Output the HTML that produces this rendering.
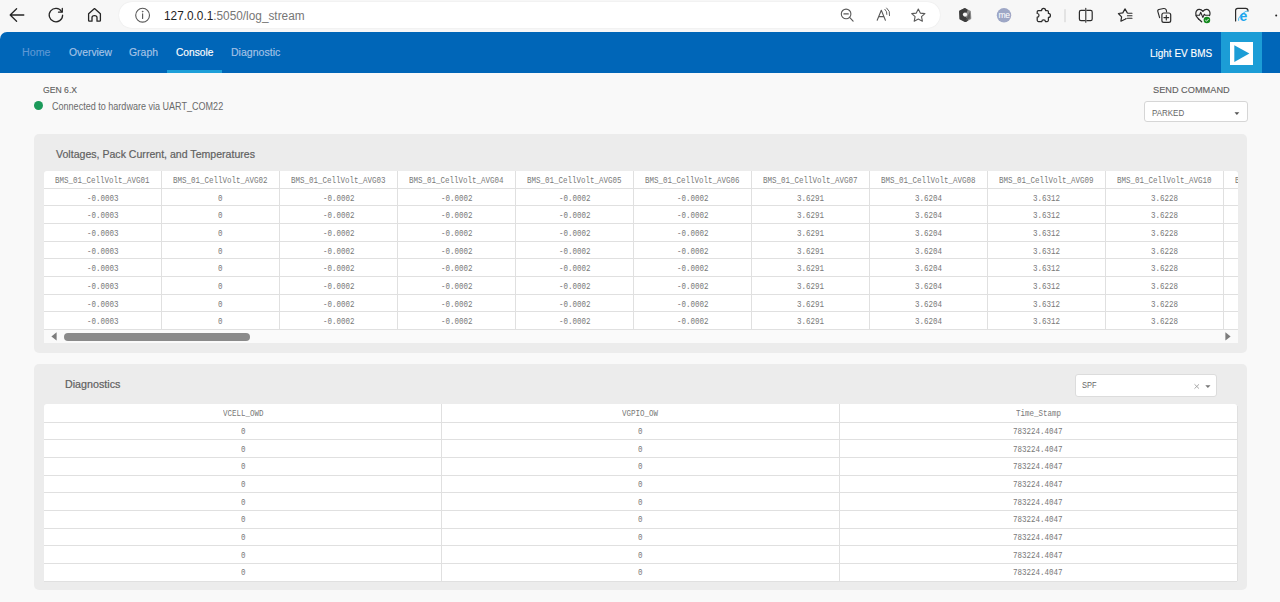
<!DOCTYPE html>
<html><head><meta charset="utf-8">
<style>
*{margin:0;padding:0;box-sizing:border-box}
html,body{width:1280px;height:602px;overflow:hidden;background:#f9f9f9;font-family:"Liberation Sans",sans-serif}
.abs{position:absolute}
#chrome{position:absolute;left:0;top:0;width:1280px;height:33px;background:#f7f7f7}
#pill{position:absolute;left:119px;top:2px;width:821px;height:25.8px;background:#fff;border-radius:12.9px;box-shadow:0 0 1.5px rgba(0,0,0,.10)}
#nav{position:absolute;left:0;top:32.3px;width:1280px;height:41px;background:#0066b8;border-top-left-radius:7px}
.card{position:absolute;left:34px;width:1213px;background:#ececec;border-radius:5px}
.hl{position:absolute;left:0;height:1px;background:#e0e0e0}
.vl{position:absolute;top:0;width:1px;background:#e0e0e0}
svg{position:absolute;overflow:visible}
</style></head>
<body>

<div id="chrome"><div id="pill"></div></div>
<div style="position:absolute;left:164.40px;top:9.00px;font-family:'Liberation Sans',sans-serif;font-weight:normal;font-size:13.66px;line-height:1;color:#767676;white-space:nowrap;transform:scaleX(0.8651);transform-origin:0 0;"><span style="color:#1f1f1f">127.0.0.1</span>:5050/log_stream</div>
<svg style="left:0;top:0" width="1280" height="32" viewBox="0 0 1280 32">
<g fill="none" stroke-linecap="round" stroke-linejoin="round">
<path d="M10.2 15 L23.8 15 M16.6 8.7 L10.2 15 L16.6 21.2" stroke="#262626" stroke-width="1.3"/>
<path d="M61.6 11.6 A6.7 6.7 0 1 0 62.6 15.2" stroke="#262626" stroke-width="1.3"/>
<path d="M62.3 8.4 L62.3 12.2 L58.5 12.2" stroke="#262626" stroke-width="1.3"/>
<path d="M88.6 13.8 L94.5 8.6 L100.4 13.8 L100.4 20.5 Q100.4 21.2 99.7 21.2 L97 21.2 L97 17.6 Q97 15.7 94.5 15.7 Q92 15.7 92 17.6 L92 21.2 L89.3 21.2 Q88.6 21.2 88.6 20.5 Z" stroke="#262626" stroke-width="1.3"/>
<circle cx="142.6" cy="15.2" r="6.9" stroke="#5a5a5a" stroke-width="1.1"/>
<path d="M142.6 13.7 L142.6 18.5" stroke="#5a5a5a" stroke-width="1.15"/>
<circle cx="142.6" cy="11.6" r="0.55" fill="#5a5a5a" stroke="#5a5a5a" stroke-width="0.4"/>
<circle cx="846.1" cy="13.9" r="4.8" stroke="#5a5a5a" stroke-width="1.1"/>
<path d="M843.9 13.9 L848.3 13.9 M849.6 17.4 L853.1 21.1" stroke="#5a5a5a" stroke-width="1.15"/>
<path d="M877.2 20.2 L881.3 10.3 L885.4 20.2 M878.6 16.6 L884 16.6" stroke="#5a5a5a" stroke-width="1.1"/>
<path d="M884.9 9.3 Q887.4 11.6 886.9 14.4 M886.7 8 Q890.6 11.2 889.6 15.6" stroke="#5a5a5a" stroke-width="0.95"/>
<path d="M918.3 9.1 L920.3 13.1 L924.9 13.6 L921.5 16.6 L922.4 21.2 L918.3 19 L914.2 21.2 L915.1 16.6 L911.7 13.6 L916.3 13.1 Z" stroke="#5a5a5a" stroke-width="1.1"/>
<path d="M1041.6 10.6 Q1041.6 8.4 1043.6 8.4 Q1045.6 8.4 1045.6 10.6 L1047.2 10.6 Q1048.4 10.6 1048.4 11.8 L1048.4 13.4 Q1050.4 13.4 1050.4 15.4 Q1050.4 17.4 1048.4 17.4 L1048.4 20.3 Q1048.4 21.5 1047.2 21.5 L1045.4 21.5 Q1045.4 19.8 1043.6 19.8 Q1041.8 19.8 1041.8 21.5 L1038.4 21.5 Q1037.2 21.5 1037.2 20.3 L1037.2 17.2 Q1039 17.2 1039 15.3 Q1039 13.4 1037.2 13.4 L1037.2 11.8 Q1037.2 10.6 1038.4 10.6 Z" stroke="#2b2b2b" stroke-width="1.25"/>
<path d="M1084.7 10.4 L1081 10.4 Q1079.4 10.4 1079.4 12 L1079.4 19 Q1079.4 20.6 1081 20.6 L1084.7 20.6 M1086.9 10.4 L1090.6 10.4 Q1092.2 10.4 1092.2 12 L1092.2 19 Q1092.2 20.6 1090.6 20.6 L1086.9 20.6" stroke="#2b2b2b" stroke-width="1.2"/>
<path d="M1085.8 8.4 L1085.8 22.2" stroke="#2b2b2b" stroke-width="1.1"/>
<path d="M1127.3 12.9 L1125 8.9 L1122.8 12.9 L1118.4 13.5 L1121.6 16.8 L1120.9 21.2 L1125 19.2 L1126.1 18.6" stroke="#2b2b2b" stroke-width="1.2"/>
<path d="M1128 13.3 L1132 13.3 M1127.4 15.8 L1132 15.8 M1127.4 18.3 L1132 18.3" stroke="#2b2b2b" stroke-width="1.1"/>
<path d="M1159.6 17.6 L1157.8 11.4 Q1157.4 9.9 1158.9 9.5 L1163.6 8.5 Q1165.5 8.2 1166.3 10 L1166.6 12" stroke="#2b2b2b" stroke-width="1.15"/>
<rect x="1161.9" y="13" width="8.8" height="9.3" rx="1.9" stroke="#2b2b2b" stroke-width="1.2"/>
<path d="M1166.3 15.3 L1166.3 20 M1163.9 17.6 L1168.7 17.6" stroke="#2b2b2b" stroke-width="1.1"/>
<path d="M1198.6 19 L1197 17.2 Q1195.6 15.6 1195.8 13.1 Q1196.2 9.6 1199.2 9.4 Q1201.3 9.3 1202.9 11.4 Q1204.5 9.3 1206.6 9.4 Q1209.6 9.6 1210 13.1 Q1210.1 14.6 1209.5 15.6" stroke="#2b2b2b" stroke-width="1.2"/>
<path d="M1196.2 15.3 L1199.5 15.3 L1200.7 12.2 L1202.8 17.4 L1204.3 14.2 L1205.3 15.3 L1209.5 15.3" stroke="#2b2b2b" stroke-width="1.1"/>
<path d="M1198.6 19 L1201.7 21.8" stroke="#2b2b2b" stroke-width="1.2"/>
<path d="M1235.6 21 L1235.6 10.6 Q1235.6 8.4 1237.8 8.4 L1245.7 8.4 Q1247.9 8.4 1247.9 10.6 L1247.9 11" stroke="#2b2b2b" stroke-width="1.2"/>
</g>
<path d="M960.2 11.6 L964.8 9.2 L969.8 11.8 L970.2 18.2 L965.4 21 L960.6 18.6 Z" fill="#8a8a8a" stroke="#8a8a8a" stroke-width="2.2" stroke-linejoin="round"/>
<path d="M960.2 11.6 L964.8 9.2 L966.5 10.1 L963.4 15.6 L967 19.9 L965.4 21 L960.6 18.6 Z" fill="#3c3c3c" stroke="#3c3c3c" stroke-width="2.2" stroke-linejoin="round"/>
<path d="M969.8 11.8 L970.2 18.2 L966.2 20.5 L967.4 16.5 Z" fill="#5a5a5a"/>
<circle cx="965" cy="14.6" r="2.1" fill="#f4f4f4"/>
<circle cx="1004" cy="15.3" r="7.2" fill="#9ea7c6"/>
<text x="1004.1" y="17.9" font-size="8.6" fill="#fff" text-anchor="middle" font-family="Liberation Sans" letter-spacing="-0.4">me</text>
<line x1="1065" y1="9.2" x2="1065" y2="22.2" stroke="#cfcfcf" stroke-width="1"/>
<circle cx="1206.9" cy="20" r="3.3" fill="#138a1e"/>
<path d="M1205.3 20.1 L1206.5 21.2 L1208.6 19" fill="none" stroke="#fff" stroke-width="0.9"/>
<path d="M1238.6 20.8 Q1237.4 18.6 1241.5 14.6 Q1246.6 10 1248.6 11.2" fill="none" stroke="#2bb2f2" stroke-width="0.9"/>
<text x="1243.4" y="20.6" font-size="14" font-weight="bold" fill="#1ea6ee" text-anchor="middle" font-family="Liberation Sans">e</text>
<circle cx="1276.2" cy="15.4" r="1" fill="#222"/>
</svg>
<div id="nav"></div>
<div style="position:absolute;left:22.00px;top:47.20px;font-family:'Liberation Sans',sans-serif;font-weight:normal;font-size:10.61px;line-height:1;color:#5e98d4;white-space:nowrap;transform:scaleX(1.0068);transform-origin:0 0;-webkit-text-stroke:0.15px currentColor">Home</div>
<div style="position:absolute;left:68.60px;top:47.20px;font-family:'Liberation Sans',sans-serif;font-weight:normal;font-size:10.61px;line-height:1;color:#a6c3e6;white-space:nowrap;transform:scaleX(0.9741);transform-origin:0 0;-webkit-text-stroke:0.15px currentColor">Overview</div>
<div style="position:absolute;left:129.00px;top:47.20px;font-family:'Liberation Sans',sans-serif;font-weight:normal;font-size:10.61px;line-height:1;color:#a6c3e6;white-space:nowrap;transform:scaleX(0.9835);transform-origin:0 0;-webkit-text-stroke:0.15px currentColor">Graph</div>
<div style="position:absolute;left:175.60px;top:47.20px;font-family:'Liberation Sans',sans-serif;font-weight:normal;font-size:10.61px;line-height:1;color:#ffffff;white-space:nowrap;transform:scaleX(0.9607);transform-origin:0 0;-webkit-text-stroke:0.15px currentColor">Console</div>
<div class="abs" style="left:167px;top:70px;width:55px;height:3px;background:#1ea0d9"></div>
<div style="position:absolute;left:231.40px;top:47.20px;font-family:'Liberation Sans',sans-serif;font-weight:normal;font-size:10.61px;line-height:1;color:#a6c3e6;white-space:nowrap;transform:scaleX(0.9952);transform-origin:0 0;-webkit-text-stroke:0.15px currentColor">Diagnostic</div>
<div style="position:absolute;left:1149.80px;top:48.00px;font-family:'Liberation Sans',sans-serif;font-weight:normal;font-size:11.48px;line-height:1;color:#ffffff;white-space:nowrap;transform:scaleX(0.8704);transform-origin:0 0;-webkit-text-stroke:0.15px currentColor">Light EV BMS</div>
<div class="abs" style="left:1221px;top:32.3px;width:41px;height:41px;background:#1c9dd6"></div>
<div class="abs" style="left:1230px;top:42px;width:23px;height:23px;background:#fff"></div>
<svg style="left:1230px;top:42px" width="23" height="23"><path d="M4.3 3.3 L19.4 11.5 L4.3 20 Z" fill="#1c9dd6"/></svg>
<div style="position:absolute;left:43.00px;top:86.20px;font-family:'Liberation Sans',sans-serif;font-weight:normal;font-size:9.01px;line-height:1;color:#5e5e5e;white-space:nowrap;transform:scaleX(0.9591);transform-origin:0 0;-webkit-text-stroke:0.12px #5e5e5e">GEN 6.X</div>
<div class="abs" style="left:33.9px;top:101.3px;width:9px;height:9px;border-radius:50%;background:#1b9a5a"></div>
<div style="position:absolute;left:52.00px;top:101.60px;font-family:'Liberation Sans',sans-serif;font-weight:normal;font-size:10.17px;line-height:1;color:#6a6a6a;white-space:nowrap;transform:scaleX(0.8901);transform-origin:0 0;">Connected to hardware via UART_COM22</div>
<div style="position:absolute;left:1152.50px;top:86.40px;font-family:'Liberation Sans',sans-serif;font-weight:normal;font-size:9.30px;line-height:1;color:#5e5e5e;white-space:nowrap;transform:scaleX(0.9896);transform-origin:0 0;-webkit-text-stroke:0.12px #5e5e5e">SEND COMMAND</div>
<div class="abs" style="left:1143.5px;top:101px;width:104px;height:21px;background:#fff;border:1px solid #d6d6d6;border-radius:3px"></div>
<div style="position:absolute;left:1151.80px;top:107.80px;font-family:'Liberation Sans',sans-serif;font-weight:normal;font-size:9.45px;line-height:1;color:#666;white-space:nowrap;transform:scaleX(0.8438);transform-origin:0 0;">PARKED</div>
<svg style="left:1234px;top:111.5px" width="6" height="4"><path d="M0.5 0.3 L5.3 0.3 L2.9 3 Z" fill="#555"/></svg>
<div class="card" style="top:133.7px;height:219px"></div>
<div style="position:absolute;left:56.00px;top:148.60px;font-family:'Liberation Sans',sans-serif;font-weight:normal;font-size:11.34px;line-height:1;color:#606060;white-space:nowrap;transform:scaleX(0.9331);transform-origin:0 0;-webkit-text-stroke:0.2px #606060">Voltages, Pack Current, and Temperatures</div>
<div class="abs" style="left:44px;top:170.8px;width:1193.6px;height:172.18px;background:#fff;border-radius:3px 3px 0 0"></div>
<div class="abs" style="left:44px;top:170.8px;width:1193.6px;height:172.18px;overflow:hidden">
<div style="position:absolute;left:11.46px;top:5.90px;font-family:'Liberation Mono',monospace;font-size:8.3px;line-height:1;color:#787878;white-space:nowrap;transform:scaleX(0.905);transform-origin:0 0">BMS_01_CellVolt_AVG01</div>
<div style="position:absolute;left:129.21px;top:5.90px;font-family:'Liberation Mono',monospace;font-size:8.3px;line-height:1;color:#787878;white-space:nowrap;transform:scaleX(0.905);transform-origin:0 0">BMS_01_CellVolt_AVG02</div>
<div style="position:absolute;left:247.15px;top:5.90px;font-family:'Liberation Mono',monospace;font-size:8.3px;line-height:1;color:#787878;white-space:nowrap;transform:scaleX(0.905);transform-origin:0 0">BMS_01_CellVolt_AVG03</div>
<div style="position:absolute;left:365.09px;top:5.90px;font-family:'Liberation Mono',monospace;font-size:8.3px;line-height:1;color:#787878;white-space:nowrap;transform:scaleX(0.905);transform-origin:0 0">BMS_01_CellVolt_AVG04</div>
<div style="position:absolute;left:483.03px;top:5.90px;font-family:'Liberation Mono',monospace;font-size:8.3px;line-height:1;color:#787878;white-space:nowrap;transform:scaleX(0.905);transform-origin:0 0">BMS_01_CellVolt_AVG05</div>
<div style="position:absolute;left:600.97px;top:5.90px;font-family:'Liberation Mono',monospace;font-size:8.3px;line-height:1;color:#787878;white-space:nowrap;transform:scaleX(0.905);transform-origin:0 0">BMS_01_CellVolt_AVG06</div>
<div style="position:absolute;left:718.91px;top:5.90px;font-family:'Liberation Mono',monospace;font-size:8.3px;line-height:1;color:#787878;white-space:nowrap;transform:scaleX(0.905);transform-origin:0 0">BMS_01_CellVolt_AVG07</div>
<div style="position:absolute;left:836.85px;top:5.90px;font-family:'Liberation Mono',monospace;font-size:8.3px;line-height:1;color:#787878;white-space:nowrap;transform:scaleX(0.905);transform-origin:0 0">BMS_01_CellVolt_AVG08</div>
<div style="position:absolute;left:954.79px;top:5.90px;font-family:'Liberation Mono',monospace;font-size:8.3px;line-height:1;color:#787878;white-space:nowrap;transform:scaleX(0.905);transform-origin:0 0">BMS_01_CellVolt_AVG09</div>
<div style="position:absolute;left:1072.73px;top:5.90px;font-family:'Liberation Mono',monospace;font-size:8.3px;line-height:1;color:#787878;white-space:nowrap;transform:scaleX(0.905);transform-origin:0 0">BMS_01_CellVolt_AVG10</div>
<div style="position:absolute;left:1190.67px;top:5.90px;font-family:'Liberation Mono',monospace;font-size:8.3px;line-height:1;color:#787878;white-space:nowrap;transform:scaleX(0.905);transform-origin:0 0">BMS_01_CellVolt_AVG11</div>
<div class="hl" style="top:17.00px;width:1194px"></div>
<div style="position:absolute;left:43.01px;top:23.80px;font-family:'Liberation Mono',monospace;font-size:8.3px;line-height:1;color:#787878;white-space:nowrap;transform:scaleX(0.905);transform-origin:0 0">-0.0003</div>
<div style="position:absolute;left:174.29px;top:23.80px;font-family:'Liberation Mono',monospace;font-size:8.3px;line-height:1;color:#787878;white-space:nowrap;transform:scaleX(0.905);transform-origin:0 0">0</div>
<div style="position:absolute;left:278.70px;top:23.80px;font-family:'Liberation Mono',monospace;font-size:8.3px;line-height:1;color:#787878;white-space:nowrap;transform:scaleX(0.905);transform-origin:0 0">-0.0002</div>
<div style="position:absolute;left:396.64px;top:23.80px;font-family:'Liberation Mono',monospace;font-size:8.3px;line-height:1;color:#787878;white-space:nowrap;transform:scaleX(0.905);transform-origin:0 0">-0.0002</div>
<div style="position:absolute;left:514.58px;top:23.80px;font-family:'Liberation Mono',monospace;font-size:8.3px;line-height:1;color:#787878;white-space:nowrap;transform:scaleX(0.905);transform-origin:0 0">-0.0002</div>
<div style="position:absolute;left:632.52px;top:23.80px;font-family:'Liberation Mono',monospace;font-size:8.3px;line-height:1;color:#787878;white-space:nowrap;transform:scaleX(0.905);transform-origin:0 0">-0.0002</div>
<div style="position:absolute;left:752.72px;top:23.80px;font-family:'Liberation Mono',monospace;font-size:8.3px;line-height:1;color:#787878;white-space:nowrap;transform:scaleX(0.905);transform-origin:0 0">3.6291</div>
<div style="position:absolute;left:870.66px;top:23.80px;font-family:'Liberation Mono',monospace;font-size:8.3px;line-height:1;color:#787878;white-space:nowrap;transform:scaleX(0.905);transform-origin:0 0">3.6204</div>
<div style="position:absolute;left:988.60px;top:23.80px;font-family:'Liberation Mono',monospace;font-size:8.3px;line-height:1;color:#787878;white-space:nowrap;transform:scaleX(0.905);transform-origin:0 0">3.6312</div>
<div style="position:absolute;left:1106.54px;top:23.80px;font-family:'Liberation Mono',monospace;font-size:8.3px;line-height:1;color:#787878;white-space:nowrap;transform:scaleX(0.905);transform-origin:0 0">3.6228</div>
<div style="position:absolute;left:1224.48px;top:23.80px;font-family:'Liberation Mono',monospace;font-size:8.3px;line-height:1;color:#787878;white-space:nowrap;transform:scaleX(0.905);transform-origin:0 0">3.6100</div>
<div class="hl" style="top:34.66px;width:1194px"></div>
<div style="position:absolute;left:43.01px;top:41.46px;font-family:'Liberation Mono',monospace;font-size:8.3px;line-height:1;color:#787878;white-space:nowrap;transform:scaleX(0.905);transform-origin:0 0">-0.0003</div>
<div style="position:absolute;left:174.29px;top:41.46px;font-family:'Liberation Mono',monospace;font-size:8.3px;line-height:1;color:#787878;white-space:nowrap;transform:scaleX(0.905);transform-origin:0 0">0</div>
<div style="position:absolute;left:278.70px;top:41.46px;font-family:'Liberation Mono',monospace;font-size:8.3px;line-height:1;color:#787878;white-space:nowrap;transform:scaleX(0.905);transform-origin:0 0">-0.0002</div>
<div style="position:absolute;left:396.64px;top:41.46px;font-family:'Liberation Mono',monospace;font-size:8.3px;line-height:1;color:#787878;white-space:nowrap;transform:scaleX(0.905);transform-origin:0 0">-0.0002</div>
<div style="position:absolute;left:514.58px;top:41.46px;font-family:'Liberation Mono',monospace;font-size:8.3px;line-height:1;color:#787878;white-space:nowrap;transform:scaleX(0.905);transform-origin:0 0">-0.0002</div>
<div style="position:absolute;left:632.52px;top:41.46px;font-family:'Liberation Mono',monospace;font-size:8.3px;line-height:1;color:#787878;white-space:nowrap;transform:scaleX(0.905);transform-origin:0 0">-0.0002</div>
<div style="position:absolute;left:752.72px;top:41.46px;font-family:'Liberation Mono',monospace;font-size:8.3px;line-height:1;color:#787878;white-space:nowrap;transform:scaleX(0.905);transform-origin:0 0">3.6291</div>
<div style="position:absolute;left:870.66px;top:41.46px;font-family:'Liberation Mono',monospace;font-size:8.3px;line-height:1;color:#787878;white-space:nowrap;transform:scaleX(0.905);transform-origin:0 0">3.6204</div>
<div style="position:absolute;left:988.60px;top:41.46px;font-family:'Liberation Mono',monospace;font-size:8.3px;line-height:1;color:#787878;white-space:nowrap;transform:scaleX(0.905);transform-origin:0 0">3.6312</div>
<div style="position:absolute;left:1106.54px;top:41.46px;font-family:'Liberation Mono',monospace;font-size:8.3px;line-height:1;color:#787878;white-space:nowrap;transform:scaleX(0.905);transform-origin:0 0">3.6228</div>
<div style="position:absolute;left:1224.48px;top:41.46px;font-family:'Liberation Mono',monospace;font-size:8.3px;line-height:1;color:#787878;white-space:nowrap;transform:scaleX(0.905);transform-origin:0 0">3.6100</div>
<div class="hl" style="top:52.32px;width:1194px"></div>
<div style="position:absolute;left:43.01px;top:59.12px;font-family:'Liberation Mono',monospace;font-size:8.3px;line-height:1;color:#787878;white-space:nowrap;transform:scaleX(0.905);transform-origin:0 0">-0.0003</div>
<div style="position:absolute;left:174.29px;top:59.12px;font-family:'Liberation Mono',monospace;font-size:8.3px;line-height:1;color:#787878;white-space:nowrap;transform:scaleX(0.905);transform-origin:0 0">0</div>
<div style="position:absolute;left:278.70px;top:59.12px;font-family:'Liberation Mono',monospace;font-size:8.3px;line-height:1;color:#787878;white-space:nowrap;transform:scaleX(0.905);transform-origin:0 0">-0.0002</div>
<div style="position:absolute;left:396.64px;top:59.12px;font-family:'Liberation Mono',monospace;font-size:8.3px;line-height:1;color:#787878;white-space:nowrap;transform:scaleX(0.905);transform-origin:0 0">-0.0002</div>
<div style="position:absolute;left:514.58px;top:59.12px;font-family:'Liberation Mono',monospace;font-size:8.3px;line-height:1;color:#787878;white-space:nowrap;transform:scaleX(0.905);transform-origin:0 0">-0.0002</div>
<div style="position:absolute;left:632.52px;top:59.12px;font-family:'Liberation Mono',monospace;font-size:8.3px;line-height:1;color:#787878;white-space:nowrap;transform:scaleX(0.905);transform-origin:0 0">-0.0002</div>
<div style="position:absolute;left:752.72px;top:59.12px;font-family:'Liberation Mono',monospace;font-size:8.3px;line-height:1;color:#787878;white-space:nowrap;transform:scaleX(0.905);transform-origin:0 0">3.6291</div>
<div style="position:absolute;left:870.66px;top:59.12px;font-family:'Liberation Mono',monospace;font-size:8.3px;line-height:1;color:#787878;white-space:nowrap;transform:scaleX(0.905);transform-origin:0 0">3.6204</div>
<div style="position:absolute;left:988.60px;top:59.12px;font-family:'Liberation Mono',monospace;font-size:8.3px;line-height:1;color:#787878;white-space:nowrap;transform:scaleX(0.905);transform-origin:0 0">3.6312</div>
<div style="position:absolute;left:1106.54px;top:59.12px;font-family:'Liberation Mono',monospace;font-size:8.3px;line-height:1;color:#787878;white-space:nowrap;transform:scaleX(0.905);transform-origin:0 0">3.6228</div>
<div style="position:absolute;left:1224.48px;top:59.12px;font-family:'Liberation Mono',monospace;font-size:8.3px;line-height:1;color:#787878;white-space:nowrap;transform:scaleX(0.905);transform-origin:0 0">3.6100</div>
<div class="hl" style="top:69.98px;width:1194px"></div>
<div style="position:absolute;left:43.01px;top:76.78px;font-family:'Liberation Mono',monospace;font-size:8.3px;line-height:1;color:#787878;white-space:nowrap;transform:scaleX(0.905);transform-origin:0 0">-0.0003</div>
<div style="position:absolute;left:174.29px;top:76.78px;font-family:'Liberation Mono',monospace;font-size:8.3px;line-height:1;color:#787878;white-space:nowrap;transform:scaleX(0.905);transform-origin:0 0">0</div>
<div style="position:absolute;left:278.70px;top:76.78px;font-family:'Liberation Mono',monospace;font-size:8.3px;line-height:1;color:#787878;white-space:nowrap;transform:scaleX(0.905);transform-origin:0 0">-0.0002</div>
<div style="position:absolute;left:396.64px;top:76.78px;font-family:'Liberation Mono',monospace;font-size:8.3px;line-height:1;color:#787878;white-space:nowrap;transform:scaleX(0.905);transform-origin:0 0">-0.0002</div>
<div style="position:absolute;left:514.58px;top:76.78px;font-family:'Liberation Mono',monospace;font-size:8.3px;line-height:1;color:#787878;white-space:nowrap;transform:scaleX(0.905);transform-origin:0 0">-0.0002</div>
<div style="position:absolute;left:632.52px;top:76.78px;font-family:'Liberation Mono',monospace;font-size:8.3px;line-height:1;color:#787878;white-space:nowrap;transform:scaleX(0.905);transform-origin:0 0">-0.0002</div>
<div style="position:absolute;left:752.72px;top:76.78px;font-family:'Liberation Mono',monospace;font-size:8.3px;line-height:1;color:#787878;white-space:nowrap;transform:scaleX(0.905);transform-origin:0 0">3.6291</div>
<div style="position:absolute;left:870.66px;top:76.78px;font-family:'Liberation Mono',monospace;font-size:8.3px;line-height:1;color:#787878;white-space:nowrap;transform:scaleX(0.905);transform-origin:0 0">3.6204</div>
<div style="position:absolute;left:988.60px;top:76.78px;font-family:'Liberation Mono',monospace;font-size:8.3px;line-height:1;color:#787878;white-space:nowrap;transform:scaleX(0.905);transform-origin:0 0">3.6312</div>
<div style="position:absolute;left:1106.54px;top:76.78px;font-family:'Liberation Mono',monospace;font-size:8.3px;line-height:1;color:#787878;white-space:nowrap;transform:scaleX(0.905);transform-origin:0 0">3.6228</div>
<div style="position:absolute;left:1224.48px;top:76.78px;font-family:'Liberation Mono',monospace;font-size:8.3px;line-height:1;color:#787878;white-space:nowrap;transform:scaleX(0.905);transform-origin:0 0">3.6100</div>
<div class="hl" style="top:87.64px;width:1194px"></div>
<div style="position:absolute;left:43.01px;top:94.44px;font-family:'Liberation Mono',monospace;font-size:8.3px;line-height:1;color:#787878;white-space:nowrap;transform:scaleX(0.905);transform-origin:0 0">-0.0003</div>
<div style="position:absolute;left:174.29px;top:94.44px;font-family:'Liberation Mono',monospace;font-size:8.3px;line-height:1;color:#787878;white-space:nowrap;transform:scaleX(0.905);transform-origin:0 0">0</div>
<div style="position:absolute;left:278.70px;top:94.44px;font-family:'Liberation Mono',monospace;font-size:8.3px;line-height:1;color:#787878;white-space:nowrap;transform:scaleX(0.905);transform-origin:0 0">-0.0002</div>
<div style="position:absolute;left:396.64px;top:94.44px;font-family:'Liberation Mono',monospace;font-size:8.3px;line-height:1;color:#787878;white-space:nowrap;transform:scaleX(0.905);transform-origin:0 0">-0.0002</div>
<div style="position:absolute;left:514.58px;top:94.44px;font-family:'Liberation Mono',monospace;font-size:8.3px;line-height:1;color:#787878;white-space:nowrap;transform:scaleX(0.905);transform-origin:0 0">-0.0002</div>
<div style="position:absolute;left:632.52px;top:94.44px;font-family:'Liberation Mono',monospace;font-size:8.3px;line-height:1;color:#787878;white-space:nowrap;transform:scaleX(0.905);transform-origin:0 0">-0.0002</div>
<div style="position:absolute;left:752.72px;top:94.44px;font-family:'Liberation Mono',monospace;font-size:8.3px;line-height:1;color:#787878;white-space:nowrap;transform:scaleX(0.905);transform-origin:0 0">3.6291</div>
<div style="position:absolute;left:870.66px;top:94.44px;font-family:'Liberation Mono',monospace;font-size:8.3px;line-height:1;color:#787878;white-space:nowrap;transform:scaleX(0.905);transform-origin:0 0">3.6204</div>
<div style="position:absolute;left:988.60px;top:94.44px;font-family:'Liberation Mono',monospace;font-size:8.3px;line-height:1;color:#787878;white-space:nowrap;transform:scaleX(0.905);transform-origin:0 0">3.6312</div>
<div style="position:absolute;left:1106.54px;top:94.44px;font-family:'Liberation Mono',monospace;font-size:8.3px;line-height:1;color:#787878;white-space:nowrap;transform:scaleX(0.905);transform-origin:0 0">3.6228</div>
<div style="position:absolute;left:1224.48px;top:94.44px;font-family:'Liberation Mono',monospace;font-size:8.3px;line-height:1;color:#787878;white-space:nowrap;transform:scaleX(0.905);transform-origin:0 0">3.6100</div>
<div class="hl" style="top:105.30px;width:1194px"></div>
<div style="position:absolute;left:43.01px;top:112.10px;font-family:'Liberation Mono',monospace;font-size:8.3px;line-height:1;color:#787878;white-space:nowrap;transform:scaleX(0.905);transform-origin:0 0">-0.0003</div>
<div style="position:absolute;left:174.29px;top:112.10px;font-family:'Liberation Mono',monospace;font-size:8.3px;line-height:1;color:#787878;white-space:nowrap;transform:scaleX(0.905);transform-origin:0 0">0</div>
<div style="position:absolute;left:278.70px;top:112.10px;font-family:'Liberation Mono',monospace;font-size:8.3px;line-height:1;color:#787878;white-space:nowrap;transform:scaleX(0.905);transform-origin:0 0">-0.0002</div>
<div style="position:absolute;left:396.64px;top:112.10px;font-family:'Liberation Mono',monospace;font-size:8.3px;line-height:1;color:#787878;white-space:nowrap;transform:scaleX(0.905);transform-origin:0 0">-0.0002</div>
<div style="position:absolute;left:514.58px;top:112.10px;font-family:'Liberation Mono',monospace;font-size:8.3px;line-height:1;color:#787878;white-space:nowrap;transform:scaleX(0.905);transform-origin:0 0">-0.0002</div>
<div style="position:absolute;left:632.52px;top:112.10px;font-family:'Liberation Mono',monospace;font-size:8.3px;line-height:1;color:#787878;white-space:nowrap;transform:scaleX(0.905);transform-origin:0 0">-0.0002</div>
<div style="position:absolute;left:752.72px;top:112.10px;font-family:'Liberation Mono',monospace;font-size:8.3px;line-height:1;color:#787878;white-space:nowrap;transform:scaleX(0.905);transform-origin:0 0">3.6291</div>
<div style="position:absolute;left:870.66px;top:112.10px;font-family:'Liberation Mono',monospace;font-size:8.3px;line-height:1;color:#787878;white-space:nowrap;transform:scaleX(0.905);transform-origin:0 0">3.6204</div>
<div style="position:absolute;left:988.60px;top:112.10px;font-family:'Liberation Mono',monospace;font-size:8.3px;line-height:1;color:#787878;white-space:nowrap;transform:scaleX(0.905);transform-origin:0 0">3.6312</div>
<div style="position:absolute;left:1106.54px;top:112.10px;font-family:'Liberation Mono',monospace;font-size:8.3px;line-height:1;color:#787878;white-space:nowrap;transform:scaleX(0.905);transform-origin:0 0">3.6228</div>
<div style="position:absolute;left:1224.48px;top:112.10px;font-family:'Liberation Mono',monospace;font-size:8.3px;line-height:1;color:#787878;white-space:nowrap;transform:scaleX(0.905);transform-origin:0 0">3.6100</div>
<div class="hl" style="top:122.96px;width:1194px"></div>
<div style="position:absolute;left:43.01px;top:129.76px;font-family:'Liberation Mono',monospace;font-size:8.3px;line-height:1;color:#787878;white-space:nowrap;transform:scaleX(0.905);transform-origin:0 0">-0.0003</div>
<div style="position:absolute;left:174.29px;top:129.76px;font-family:'Liberation Mono',monospace;font-size:8.3px;line-height:1;color:#787878;white-space:nowrap;transform:scaleX(0.905);transform-origin:0 0">0</div>
<div style="position:absolute;left:278.70px;top:129.76px;font-family:'Liberation Mono',monospace;font-size:8.3px;line-height:1;color:#787878;white-space:nowrap;transform:scaleX(0.905);transform-origin:0 0">-0.0002</div>
<div style="position:absolute;left:396.64px;top:129.76px;font-family:'Liberation Mono',monospace;font-size:8.3px;line-height:1;color:#787878;white-space:nowrap;transform:scaleX(0.905);transform-origin:0 0">-0.0002</div>
<div style="position:absolute;left:514.58px;top:129.76px;font-family:'Liberation Mono',monospace;font-size:8.3px;line-height:1;color:#787878;white-space:nowrap;transform:scaleX(0.905);transform-origin:0 0">-0.0002</div>
<div style="position:absolute;left:632.52px;top:129.76px;font-family:'Liberation Mono',monospace;font-size:8.3px;line-height:1;color:#787878;white-space:nowrap;transform:scaleX(0.905);transform-origin:0 0">-0.0002</div>
<div style="position:absolute;left:752.72px;top:129.76px;font-family:'Liberation Mono',monospace;font-size:8.3px;line-height:1;color:#787878;white-space:nowrap;transform:scaleX(0.905);transform-origin:0 0">3.6291</div>
<div style="position:absolute;left:870.66px;top:129.76px;font-family:'Liberation Mono',monospace;font-size:8.3px;line-height:1;color:#787878;white-space:nowrap;transform:scaleX(0.905);transform-origin:0 0">3.6204</div>
<div style="position:absolute;left:988.60px;top:129.76px;font-family:'Liberation Mono',monospace;font-size:8.3px;line-height:1;color:#787878;white-space:nowrap;transform:scaleX(0.905);transform-origin:0 0">3.6312</div>
<div style="position:absolute;left:1106.54px;top:129.76px;font-family:'Liberation Mono',monospace;font-size:8.3px;line-height:1;color:#787878;white-space:nowrap;transform:scaleX(0.905);transform-origin:0 0">3.6228</div>
<div style="position:absolute;left:1224.48px;top:129.76px;font-family:'Liberation Mono',monospace;font-size:8.3px;line-height:1;color:#787878;white-space:nowrap;transform:scaleX(0.905);transform-origin:0 0">3.6100</div>
<div class="hl" style="top:140.62px;width:1194px"></div>
<div style="position:absolute;left:43.01px;top:147.42px;font-family:'Liberation Mono',monospace;font-size:8.3px;line-height:1;color:#787878;white-space:nowrap;transform:scaleX(0.905);transform-origin:0 0">-0.0003</div>
<div style="position:absolute;left:174.29px;top:147.42px;font-family:'Liberation Mono',monospace;font-size:8.3px;line-height:1;color:#787878;white-space:nowrap;transform:scaleX(0.905);transform-origin:0 0">0</div>
<div style="position:absolute;left:278.70px;top:147.42px;font-family:'Liberation Mono',monospace;font-size:8.3px;line-height:1;color:#787878;white-space:nowrap;transform:scaleX(0.905);transform-origin:0 0">-0.0002</div>
<div style="position:absolute;left:396.64px;top:147.42px;font-family:'Liberation Mono',monospace;font-size:8.3px;line-height:1;color:#787878;white-space:nowrap;transform:scaleX(0.905);transform-origin:0 0">-0.0002</div>
<div style="position:absolute;left:514.58px;top:147.42px;font-family:'Liberation Mono',monospace;font-size:8.3px;line-height:1;color:#787878;white-space:nowrap;transform:scaleX(0.905);transform-origin:0 0">-0.0002</div>
<div style="position:absolute;left:632.52px;top:147.42px;font-family:'Liberation Mono',monospace;font-size:8.3px;line-height:1;color:#787878;white-space:nowrap;transform:scaleX(0.905);transform-origin:0 0">-0.0002</div>
<div style="position:absolute;left:752.72px;top:147.42px;font-family:'Liberation Mono',monospace;font-size:8.3px;line-height:1;color:#787878;white-space:nowrap;transform:scaleX(0.905);transform-origin:0 0">3.6291</div>
<div style="position:absolute;left:870.66px;top:147.42px;font-family:'Liberation Mono',monospace;font-size:8.3px;line-height:1;color:#787878;white-space:nowrap;transform:scaleX(0.905);transform-origin:0 0">3.6204</div>
<div style="position:absolute;left:988.60px;top:147.42px;font-family:'Liberation Mono',monospace;font-size:8.3px;line-height:1;color:#787878;white-space:nowrap;transform:scaleX(0.905);transform-origin:0 0">3.6312</div>
<div style="position:absolute;left:1106.54px;top:147.42px;font-family:'Liberation Mono',monospace;font-size:8.3px;line-height:1;color:#787878;white-space:nowrap;transform:scaleX(0.905);transform-origin:0 0">3.6228</div>
<div style="position:absolute;left:1224.48px;top:147.42px;font-family:'Liberation Mono',monospace;font-size:8.3px;line-height:1;color:#787878;white-space:nowrap;transform:scaleX(0.905);transform-origin:0 0">3.6100</div>
<div class="hl" style="top:158.28px;width:1194px"></div>
<div class="vl" style="left:117.07px;height:158.78px"></div>
<div class="vl" style="left:235.01px;height:158.78px"></div>
<div class="vl" style="left:352.95px;height:158.78px"></div>
<div class="vl" style="left:470.89px;height:158.78px"></div>
<div class="vl" style="left:588.83px;height:158.78px"></div>
<div class="vl" style="left:706.77px;height:158.78px"></div>
<div class="vl" style="left:824.71px;height:158.78px"></div>
<div class="vl" style="left:942.65px;height:158.78px"></div>
<div class="vl" style="left:1060.59px;height:158.78px"></div>
<div class="vl" style="left:1178.53px;height:158.78px"></div>
</div>
<div class="abs" style="left:44px;top:330.08px;width:1193.6px;height:13px;background:#fafafa"></div>
<svg style="left:51px;top:332.28px" width="6" height="9"><path d="M5.6 0.2 L5.6 8.6 L0.4 4.4 Z" fill="#7c7c7c"/></svg>
<div class="abs" style="left:64.2px;top:332.98px;width:185.8px;height:7.6px;border-radius:4px;background:#8a8a8a"></div>
<svg style="left:1224.5px;top:332.18px" width="6" height="9"><path d="M0.4 0.2 L0.4 8.6 L5.6 4.4 Z" fill="#7c7c7c"/></svg>
<div class="card" style="top:364.3px;height:225.7px"></div>
<div style="position:absolute;left:64.60px;top:378.80px;font-family:'Liberation Sans',sans-serif;font-weight:normal;font-size:10.76px;line-height:1;color:#606060;white-space:nowrap;transform:scaleX(0.9961);transform-origin:0 0;-webkit-text-stroke:0.2px #606060">Diagnostics</div>
<div class="abs" style="left:1075.3px;top:373.8px;width:141.3px;height:23px;background:#fff;border:1px solid #dcdcdc;border-radius:3px"></div>
<div style="position:absolute;left:1081.90px;top:380.10px;font-family:'Liberation Sans',sans-serif;font-weight:normal;font-size:9.45px;line-height:1;color:#666;white-space:nowrap;transform:scaleX(0.7889);transform-origin:0 0;">SPF</div>
<svg style="left:1193px;top:383px" width="8" height="7"><path d="M1.5 1.3 L6 5.6 M6 1.3 L1.5 5.6" stroke="#9a9a9a" stroke-width="0.85"/></svg>
<svg style="left:1204.8px;top:384.8px" width="6" height="4"><path d="M0.3 0.3 L5.5 0.3 L2.9 3 Z" fill="#777"/></svg>
<div class="abs" style="left:44px;top:404.0px;width:1193px;height:177.04px;background:#fff;border-radius:3px 3px 0 0"></div>
<div style="position:absolute;left:222.55px;top:410.00px;font-family:'Liberation Mono',monospace;font-size:8.3px;line-height:1;color:#787878;white-space:nowrap;transform:scaleX(0.905);transform-origin:0 0">VCELL_OWD</div>
<div style="position:absolute;left:622.47px;top:410.00px;font-family:'Liberation Mono',monospace;font-size:8.3px;line-height:1;color:#787878;white-space:nowrap;transform:scaleX(0.905);transform-origin:0 0">VGPIO_OW</div>
<div style="position:absolute;left:1015.63px;top:410.00px;font-family:'Liberation Mono',monospace;font-size:8.3px;line-height:1;color:#787878;white-space:nowrap;transform:scaleX(0.905);transform-origin:0 0">Time_Stamp</div>
<div class="hl" style="left:44px;top:421.60px;width:1193px"></div>
<div style="position:absolute;left:240.58px;top:428.10px;font-family:'Liberation Mono',monospace;font-size:8.3px;line-height:1;color:#787878;white-space:nowrap;transform:scaleX(0.905);transform-origin:0 0">0</div>
<div style="position:absolute;left:638.25px;top:428.10px;font-family:'Liberation Mono',monospace;font-size:8.3px;line-height:1;color:#787878;white-space:nowrap;transform:scaleX(0.905);transform-origin:0 0">0</div>
<div style="position:absolute;left:1013.37px;top:428.10px;font-family:'Liberation Mono',monospace;font-size:8.3px;line-height:1;color:#787878;white-space:nowrap;transform:scaleX(0.905);transform-origin:0 0">783224.4047</div>
<div class="hl" style="left:44px;top:439.26px;width:1193px"></div>
<div style="position:absolute;left:240.58px;top:445.76px;font-family:'Liberation Mono',monospace;font-size:8.3px;line-height:1;color:#787878;white-space:nowrap;transform:scaleX(0.905);transform-origin:0 0">0</div>
<div style="position:absolute;left:638.25px;top:445.76px;font-family:'Liberation Mono',monospace;font-size:8.3px;line-height:1;color:#787878;white-space:nowrap;transform:scaleX(0.905);transform-origin:0 0">0</div>
<div style="position:absolute;left:1013.37px;top:445.76px;font-family:'Liberation Mono',monospace;font-size:8.3px;line-height:1;color:#787878;white-space:nowrap;transform:scaleX(0.905);transform-origin:0 0">783224.4047</div>
<div class="hl" style="left:44px;top:456.92px;width:1193px"></div>
<div style="position:absolute;left:240.58px;top:463.42px;font-family:'Liberation Mono',monospace;font-size:8.3px;line-height:1;color:#787878;white-space:nowrap;transform:scaleX(0.905);transform-origin:0 0">0</div>
<div style="position:absolute;left:638.25px;top:463.42px;font-family:'Liberation Mono',monospace;font-size:8.3px;line-height:1;color:#787878;white-space:nowrap;transform:scaleX(0.905);transform-origin:0 0">0</div>
<div style="position:absolute;left:1013.37px;top:463.42px;font-family:'Liberation Mono',monospace;font-size:8.3px;line-height:1;color:#787878;white-space:nowrap;transform:scaleX(0.905);transform-origin:0 0">783224.4047</div>
<div class="hl" style="left:44px;top:474.58px;width:1193px"></div>
<div style="position:absolute;left:240.58px;top:481.08px;font-family:'Liberation Mono',monospace;font-size:8.3px;line-height:1;color:#787878;white-space:nowrap;transform:scaleX(0.905);transform-origin:0 0">0</div>
<div style="position:absolute;left:638.25px;top:481.08px;font-family:'Liberation Mono',monospace;font-size:8.3px;line-height:1;color:#787878;white-space:nowrap;transform:scaleX(0.905);transform-origin:0 0">0</div>
<div style="position:absolute;left:1013.37px;top:481.08px;font-family:'Liberation Mono',monospace;font-size:8.3px;line-height:1;color:#787878;white-space:nowrap;transform:scaleX(0.905);transform-origin:0 0">783224.4047</div>
<div class="hl" style="left:44px;top:492.24px;width:1193px"></div>
<div style="position:absolute;left:240.58px;top:498.74px;font-family:'Liberation Mono',monospace;font-size:8.3px;line-height:1;color:#787878;white-space:nowrap;transform:scaleX(0.905);transform-origin:0 0">0</div>
<div style="position:absolute;left:638.25px;top:498.74px;font-family:'Liberation Mono',monospace;font-size:8.3px;line-height:1;color:#787878;white-space:nowrap;transform:scaleX(0.905);transform-origin:0 0">0</div>
<div style="position:absolute;left:1013.37px;top:498.74px;font-family:'Liberation Mono',monospace;font-size:8.3px;line-height:1;color:#787878;white-space:nowrap;transform:scaleX(0.905);transform-origin:0 0">783224.4047</div>
<div class="hl" style="left:44px;top:509.90px;width:1193px"></div>
<div style="position:absolute;left:240.58px;top:516.40px;font-family:'Liberation Mono',monospace;font-size:8.3px;line-height:1;color:#787878;white-space:nowrap;transform:scaleX(0.905);transform-origin:0 0">0</div>
<div style="position:absolute;left:638.25px;top:516.40px;font-family:'Liberation Mono',monospace;font-size:8.3px;line-height:1;color:#787878;white-space:nowrap;transform:scaleX(0.905);transform-origin:0 0">0</div>
<div style="position:absolute;left:1013.37px;top:516.40px;font-family:'Liberation Mono',monospace;font-size:8.3px;line-height:1;color:#787878;white-space:nowrap;transform:scaleX(0.905);transform-origin:0 0">783224.4047</div>
<div class="hl" style="left:44px;top:527.56px;width:1193px"></div>
<div style="position:absolute;left:240.58px;top:534.06px;font-family:'Liberation Mono',monospace;font-size:8.3px;line-height:1;color:#787878;white-space:nowrap;transform:scaleX(0.905);transform-origin:0 0">0</div>
<div style="position:absolute;left:638.25px;top:534.06px;font-family:'Liberation Mono',monospace;font-size:8.3px;line-height:1;color:#787878;white-space:nowrap;transform:scaleX(0.905);transform-origin:0 0">0</div>
<div style="position:absolute;left:1013.37px;top:534.06px;font-family:'Liberation Mono',monospace;font-size:8.3px;line-height:1;color:#787878;white-space:nowrap;transform:scaleX(0.905);transform-origin:0 0">783224.4047</div>
<div class="hl" style="left:44px;top:545.22px;width:1193px"></div>
<div style="position:absolute;left:240.58px;top:551.72px;font-family:'Liberation Mono',monospace;font-size:8.3px;line-height:1;color:#787878;white-space:nowrap;transform:scaleX(0.905);transform-origin:0 0">0</div>
<div style="position:absolute;left:638.25px;top:551.72px;font-family:'Liberation Mono',monospace;font-size:8.3px;line-height:1;color:#787878;white-space:nowrap;transform:scaleX(0.905);transform-origin:0 0">0</div>
<div style="position:absolute;left:1013.37px;top:551.72px;font-family:'Liberation Mono',monospace;font-size:8.3px;line-height:1;color:#787878;white-space:nowrap;transform:scaleX(0.905);transform-origin:0 0">783224.4047</div>
<div class="hl" style="left:44px;top:562.88px;width:1193px"></div>
<div style="position:absolute;left:240.58px;top:569.38px;font-family:'Liberation Mono',monospace;font-size:8.3px;line-height:1;color:#787878;white-space:nowrap;transform:scaleX(0.905);transform-origin:0 0">0</div>
<div style="position:absolute;left:638.25px;top:569.38px;font-family:'Liberation Mono',monospace;font-size:8.3px;line-height:1;color:#787878;white-space:nowrap;transform:scaleX(0.905);transform-origin:0 0">0</div>
<div style="position:absolute;left:1013.37px;top:569.38px;font-family:'Liberation Mono',monospace;font-size:8.3px;line-height:1;color:#787878;white-space:nowrap;transform:scaleX(0.905);transform-origin:0 0">783224.4047</div>
<div class="hl" style="left:44px;top:580.54px;width:1193px"></div>
<div class="vl" style="left:441.17px;top:404.0px;height:177.04px"></div>
<div class="vl" style="left:838.83px;top:404.0px;height:177.04px"></div>
<div class="vl" style="left:1236.6px;top:406px;height:175.04px"></div>
</body></html>
